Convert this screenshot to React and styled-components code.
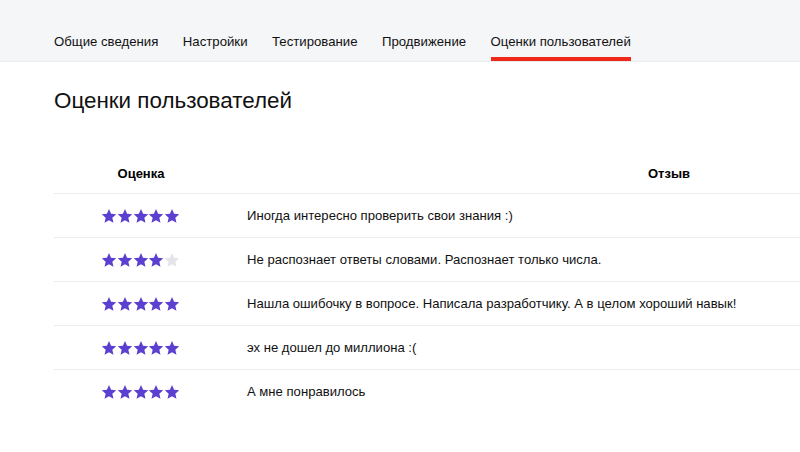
import React from "react";
import styled, { createGlobalStyle } from "styled-components";

const Global = createGlobalStyle`
  html, body { margin: 0; padding: 0; background: #fff; overflow: hidden; }
  body { font-family: "Liberation Sans", Arial, sans-serif; color: #000; }
`;

const Page = styled.div`
  width: 800px;
  height: 452px;
  overflow: hidden;
`;

const TabBar = styled.nav`
  height: 62px;
  background: #f5f6f8;
  border-bottom: 1px solid #ebecee;
  display: flex;
  align-items: flex-end;
  gap: 24.5px;
  padding: 0 54px;
  box-sizing: border-box;
`;

const Tab = styled.div`
  font-size: 13.2px;
  color: #111;
  height: 41px;
  display: flex;
  align-items: flex-start;
  padding-top: 14px;
  box-sizing: border-box;
  border-bottom: 4px solid ${(p) => (p.$active ? "#f0281c" : "transparent")};
  white-space: nowrap;
`;

const Content = styled.main`
  padding: 0 0 0 54px;
`;

const Title = styled.h1`
  margin: 0;
  padding-top: 25px;
  font-size: 22.4px;
  font-weight: 400;
  line-height: 28px;
  color: #111;
`;

const Table = styled.div`
  margin-top: 38px;
  width: 1056px;
  display: grid;
  grid-template-columns: 174px 1fr;
`;

const HeadCell = styled.div`
  height: 40px;
  display: flex;
  align-items: center;
  justify-content: center;
  font-size: 13px;
  font-weight: 700;
  border-bottom: 1px solid #ededed;
`;

const Cell = styled.div`
  height: 43px;
  display: flex;
  align-items: center;
  justify-content: ${(p) => (p.$center ? "center" : "flex-start")};
  padding-left: ${(p) => (p.$center ? "0" : "19px")};
  font-size: 13.1px;
  color: #111;
  border-bottom: 1px solid ${(p) => (p.$last ? "transparent" : "#ededed")};
`;

const Stars = styled.div`
  display: flex;
  margin-left: -1px;
`;

const StarSvg = styled.svg`
  width: 16px;
  height: 16px;
  display: block;
  margin-right: -0.4px;
  fill: ${(p) => (p.$on ? "#5b3fd0" : "#e3e5ea")};
`;

const Star = ({ on }) => (
  <StarSvg $on={on} viewBox="0 0 24 24">
    <path d="M12 1.6l3.1 7.1 7.7.7-5.8 5.1 1.7 7.6L12 18.2l-6.7 3.9 1.7-7.6L1.2 9.4l7.7-.7z" />
  </StarSvg>
);

const tabs = ["Общие сведения", "Настройки", "Тестирование", "Продвижение", "Оценки пользователей"];

const reviews = [
  { r: 5, t: "Иногда интересно проверить свои знания :)" },
  { r: 4, t: "Не распознает ответы словами. Распознает только числа." },
  { r: 5, t: "Нашла ошибочку в вопросе. Написала разработчику. А в целом хороший навык!" },
  { r: 5, t: "эх не дошел до миллиона :(" },
  { r: 5, t: "А мне понравилось" },
];

export default function App() {
  return (
    <Page>
      <Global />
      <TabBar>
        {tabs.map((t, i) => (
          <Tab key={t} $active={i === tabs.length - 1}>
            {t}
          </Tab>
        ))}
      </TabBar>
      <Content>
        <Title>Оценки пользователей</Title>
        <Table>
          <HeadCell>Оценка</HeadCell>
          <HeadCell>Отзыв</HeadCell>
          {reviews.map((rv, i) => {
            const last = i === reviews.length - 1;
            return (
              <React.Fragment key={i}>
                <Cell $center $last={last}>
                  <Stars>
                    {[0, 1, 2, 3, 4].map((k) => (
                      <Star key={k} on={k < rv.r} />
                    ))}
                  </Stars>
                </Cell>
                <Cell $last={last}>{rv.t}</Cell>
              </React.Fragment>
            );
          })}
        </Table>
      </Content>
    </Page>
  );
}
